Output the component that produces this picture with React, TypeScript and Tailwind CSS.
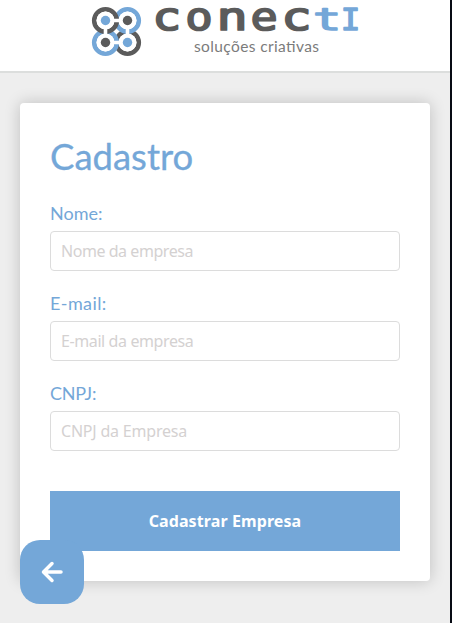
import React from "react";

const BLUE = "#74a7d8";
const GRAY = "#5b5b5b";

const letters = [
  { ch: "c", x: 155, w: 23, color: GRAY },
  { ch: "o", x: 187, w: 24, color: GRAY },
  { ch: "n", x: 220, w: 24, color: GRAY },
  { ch: "e", x: 252, w: 24, color: GRAY },
  { ch: "c", x: 284, w: 24, color: GRAY },
  { ch: "t", x: 314, w: 24, color: BLUE },
  { ch: "I", x: 343, w: 15, color: BLUE },
];

// Ink boxes of the monospace letters, in thousandths of an em.
const ink: Record<string, { left: number; width: number; height: number; drop: number }> = {
  c: { left: 74, width: 440, height: 574, drop: 14 },
  o: { left: 58, width: 486, height: 574, drop: 14 },
  n: { left: 84, width: 428, height: 560, drop: 0 },
  e: { left: 53, width: 490, height: 574, drop: 14 },
  t: { left: 41, width: 475, height: 702, drop: 0 },
  I: { left: 98, width: 406, height: 729, drop: 0 },
};

function Logo() {
  return (
    <svg width="450" height="71" viewBox="0 0 450 71" className="block overflow-visible">
      <g fill="none" strokeWidth="4.6">
        <circle cx="127.5" cy="42.5" r="11.3" stroke={GRAY} />
        <circle cx="127.5" cy="20.5" r="11.3" stroke={BLUE} />
        <circle cx="105.5" cy="42.5" r="11.3" stroke={BLUE} />
        <circle cx="105.5" cy="20.5" r="11.3" stroke={GRAY} />
      </g>
      <g fill="#fff">
        <circle cx="105.5" cy="20.5" r="9" />
        <circle cx="127.5" cy="20.5" r="9" />
        <circle cx="105.5" cy="42.5" r="9" />
        <circle cx="127.5" cy="42.5" r="9" />
      </g>
      <path d="M105.5 20.5h22v22h-22z" fill="none" stroke="#fff" strokeWidth="3.6" />
      <circle cx="105.5" cy="20.5" r="4.7" fill={BLUE} />
      <circle cx="127.5" cy="20.5" r="4.7" fill={GRAY} />
      <circle cx="105.5" cy="42.5" r="4.7" fill={GRAY} />
      <circle cx="127.5" cy="42.5" r="4.7" fill={BLUE} />
      {letters.map((l, i) => {
        const m = ink[l.ch];
        const sx = (l.w - 1.8) / (m.width * 0.04);
        const sy = 21.4 / (m.height * 0.04);
        return (
          <text
            key={i}
            className="font-['DejaVu_Sans_Mono',monospace] text-[40px]"
            fill={l.color}
            stroke={l.color}
            strokeWidth="1.8"
            strokeLinejoin="round"
            transform={`translate(${l.x + 0.9 - m.left * 0.04 * sx} ${30.4 - m.drop * 0.04 * sy}) scale(${sx} ${sy})`}
          >
            {l.ch}
          </text>
        );
      })}
      <text
        x="194"
        y="52"
        textLength="125"
        fill="#7b7b7b"
        className="font-['Lato',sans-serif] text-[15.5px]"
      >
        soluções criativas
      </text>
    </svg>
  );
}

function Field({ label, placeholder, labelSpacing, inputSpacing }: {
  label: string;
  placeholder: string;
  labelSpacing: string;
  inputSpacing: string;
}) {
  return (
    <div className="mb-5 h-[70px]">
      <label className={`block h-[30px] font-['Lato',sans-serif] text-[18px] leading-[25px] text-[#74a7d8] ${labelSpacing}`}>
        {label}
      </label>
      <input
        className={`block h-10 w-full rounded border border-[#dcdcdc] bg-white px-2.5 font-['Noto_Sans',sans-serif] text-[16px] placeholder:text-[#d4d1d1] ${inputSpacing}`}
        placeholder={placeholder}
      />
    </div>
  );
}

export default function App() {
  return (
    <div className="relative flex h-[623px] w-[452px] flex-col border-r-2 border-[#080b14] bg-[#eeeeee]">
      <header className="h-[73px] border-b-2 border-[#dcdedd] bg-white">
        <Logo />
      </header>
      <main className="mx-5 mt-[30px] h-[478px] rounded bg-white px-[30px] pt-[30px] shadow-[0_0_16px_rgba(0,0,0,0.2)]">
        <h1 className="mb-5 h-12 font-['Lato',sans-serif] text-[36.5px] leading-[47px] text-[#74a7d8] [-webkit-text-stroke:0.3px_#74a7d8]">
          Cadastro
        </h1>
        <Field label="Nome:" placeholder="Nome da empresa" labelSpacing="tracking-[0px]" inputSpacing="tracking-[-0.45px]" />
        <Field label="E-mail:" placeholder="E-mail da empresa" labelSpacing="tracking-[0.4px]" inputSpacing="tracking-[-0.4px]" />
        <Field label="CNPJ:" placeholder="CNPJ da Empresa" labelSpacing="tracking-[-0.2px]" inputSpacing="tracking-[-0.2px]" />
        <button className="mt-10 block h-[60px] w-full bg-[#74a7d8] font-['Noto_Sans',sans-serif] text-[16px] font-bold tracking-[0.1px] text-white">
          Cadastrar Empresa
        </button>
      </main>
      <button aria-label="Voltar" className="absolute left-5 top-[540px] flex size-16 items-center justify-center rounded-[20px] bg-[#74a7d8]">
        <svg width="24" height="24" viewBox="0 0 24 24" fill="none" stroke="#fff" strokeWidth="3.5" strokeLinecap="round" strokeLinejoin="round">
          <path d="M12 3.5 3.5 12l8.500 8.500M4 12h17" />
        </svg>
      </button>
    </div>
  );
}
